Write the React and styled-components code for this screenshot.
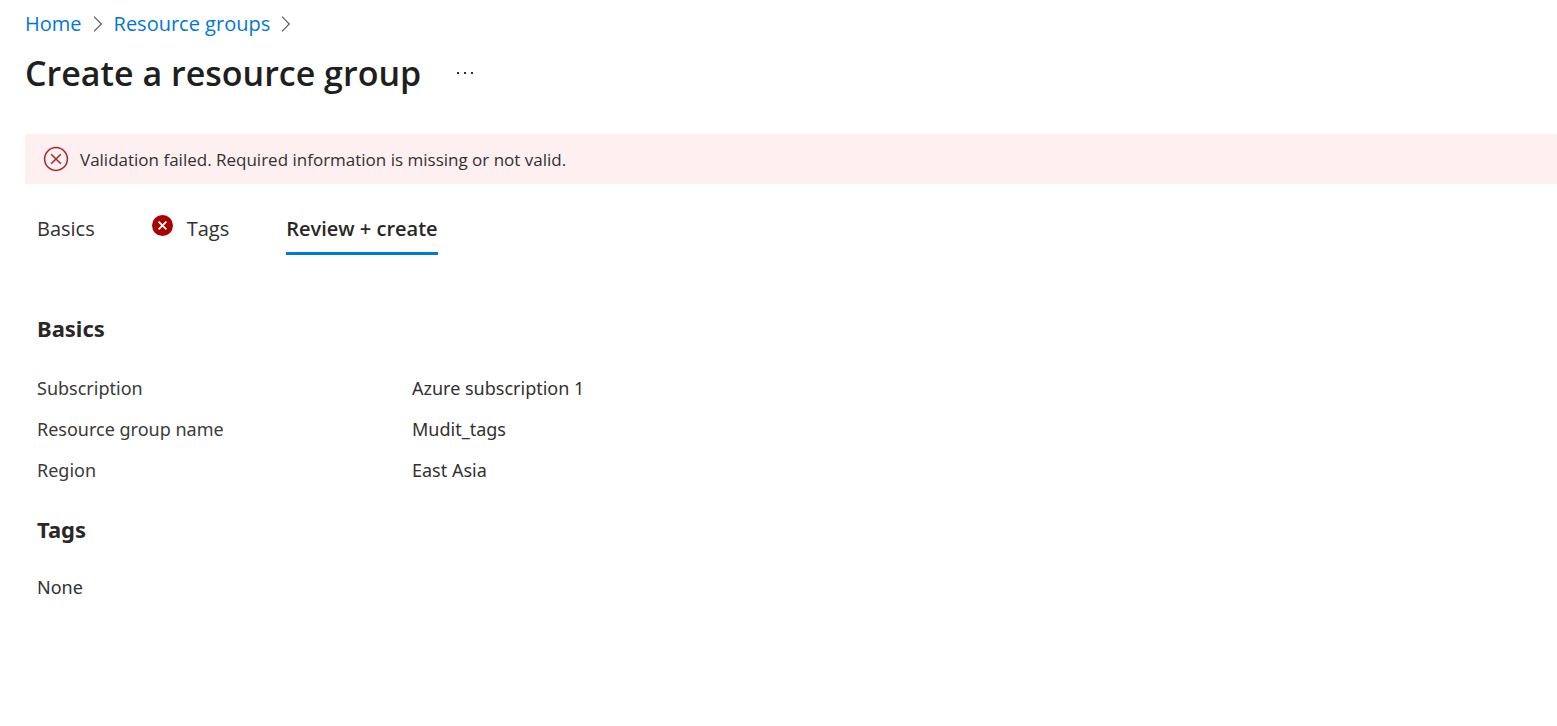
import React from "react";
import styled, { createGlobalStyle } from "styled-components";

const GlobalStyle = createGlobalStyle`
  * { box-sizing: border-box; }
  body {
    margin: 0;
    background: #fff;
    color: #323130;
    font-family: "Segoe UI", "Open Sans", "Noto Sans", sans-serif;
    font-size: 18px;
  }
`;

const Page = styled.main`
  padding: 8px 0 32px 25px;
`;

const Breadcrumb = styled.nav`
  display: flex;
  align-items: center;
  gap: 11px;
  height: 32px;
`;

const CrumbLink = styled.a`
  color: #0078d4;
  font-size: 20px;
  line-height: 32px;
  text-decoration: none;
`;

const Chevron = styled.svg`
  width: 10px;
  height: 16px;
  fill: none;
  stroke: #605e5c;
  stroke-width: 1.2;
`;

const TitleRow = styled.header`
  display: flex;
  align-items: center;
  gap: 28px;
  height: 66px;
`;

const Title = styled.h1`
  margin: 0;
  color: #201f1e;
  font-size: 34px;
  font-weight: 600;
  line-height: 48px;
`;

const MoreButton = styled.button`
  display: flex;
  align-items: center;
  justify-content: center;
  width: 32px;
  height: 32px;
  padding: 0;
  border: 0;
  background: none;

  svg {
    width: 18px;
    height: 4px;
    fill: #323130;
  }
`;

const ErrorBanner = styled.div`
  display: flex;
  align-items: center;
  gap: 11px;
  height: 50px;
  margin-top: 28px;
  padding: 0 18px;
  background: #feeff0;
  font-size: 17px;

  svg {
    width: 26px;
    height: 26px;
    fill: none;
    stroke: #a4262c;
    stroke-width: 1.5;
  }
`;

const Tabs = styled.div`
  display: flex;
  gap: 57px;
  margin-top: 20px;
  padding-left: 12px;
`;

const Tab = styled.button`
  display: flex;
  align-items: center;
  gap: 14px;
  height: 51px;
  padding: 0;
  border: 0;
  border-bottom: 3px solid ${(p) => (p["aria-selected"] ? "#0078d4" : "transparent")};
  background: none;
  color: ${(p) => (p["aria-selected"] ? "#292827" : "#323130")};
  font-family: inherit;
  font-size: 20px;
  font-weight: ${(p) => (p["aria-selected"] ? 600 : 400)};

  svg {
    width: 21px;
    height: 21px;
    margin-bottom: 6px;
  }
`;

const Summary = styled.div`
  padding: 55px 12px 0;
  font-family: "Segoe UI", "Noto Sans", "Open Sans", sans-serif;
`;

const SectionTitle = styled.h2`
  margin: 0;
  color: #292827;
  font-size: 22px;
  font-weight: 700;
  line-height: 36px;
`;

const Details = styled.dl`
  display: grid;
  grid-template-columns: 375px 1fr;
  margin: 22px 0 20px;
  line-height: 41px;

  dt { color: #3b3a39; }
  dd { margin: 0; }
`;

const EmptyText = styled.p`
  margin: 20px 0;
  line-height: 41px;
`;

const Separator = () => (
  <Chevron viewBox="0 0 10 16" aria-hidden="true">
    <path d="M1 .7 8.3 8 1 15.3" />
  </Chevron>
);

const details = [
  ["Subscription", "Azure subscription 1"],
  ["Resource group name", "Mudit_tags"],
  ["Region", "East Asia"],
];

export default function App() {
  return (
    <Page>
      <GlobalStyle />
      <Breadcrumb aria-label="Breadcrumb">
        <CrumbLink href="#home">Home</CrumbLink>
        <Separator />
        <CrumbLink href="#resource-groups">Resource groups</CrumbLink>
        <Separator />
      </Breadcrumb>
      <TitleRow>
        <Title>Create a resource group</Title>
        <MoreButton aria-label="More actions">
          <svg viewBox="0 0 18 4" aria-hidden="true">
            <rect x="1" y="1" width="2" height="2" />
            <rect x="8" y="1" width="2" height="2" />
            <rect x="15" y="1" width="2" height="2" />
          </svg>
        </MoreButton>
      </TitleRow>
      <ErrorBanner role="alert">
        <svg viewBox="0 0 26 26" aria-hidden="true">
          <circle cx="13" cy="13" r="11.4" />
          <path d="m8.2 8.2 9.6 9.6m0-9.6-9.6 9.6" />
        </svg>
        <span>Validation failed. Required information is missing or not valid.</span>
      </ErrorBanner>
      <Tabs role="tablist">
        <Tab role="tab" aria-selected={false}>Basics</Tab>
        <Tab role="tab" aria-selected={false}>
          <svg viewBox="0 0 21 21" aria-hidden="true">
            <circle cx="10.5" cy="10.5" r="10.5" fill="#a80000" />
            <path d="m6.6 6.6 7.8 7.8m0-7.8-7.8 7.8" stroke="#fff" strokeWidth="1.8" />
          </svg>
          Tags
        </Tab>
        <Tab role="tab" aria-selected={true}>Review + create</Tab>
      </Tabs>
      <Summary role="tabpanel">
        <SectionTitle>Basics</SectionTitle>
        <Details>
          {details.map(([name, value]) => (
            <React.Fragment key={name}>
              <dt>{name}</dt>
              <dd>{value}</dd>
            </React.Fragment>
          ))}
        </Details>
        <SectionTitle>Tags</SectionTitle>
        <EmptyText>None</EmptyText>
      </Summary>
    </Page>
  );
}
